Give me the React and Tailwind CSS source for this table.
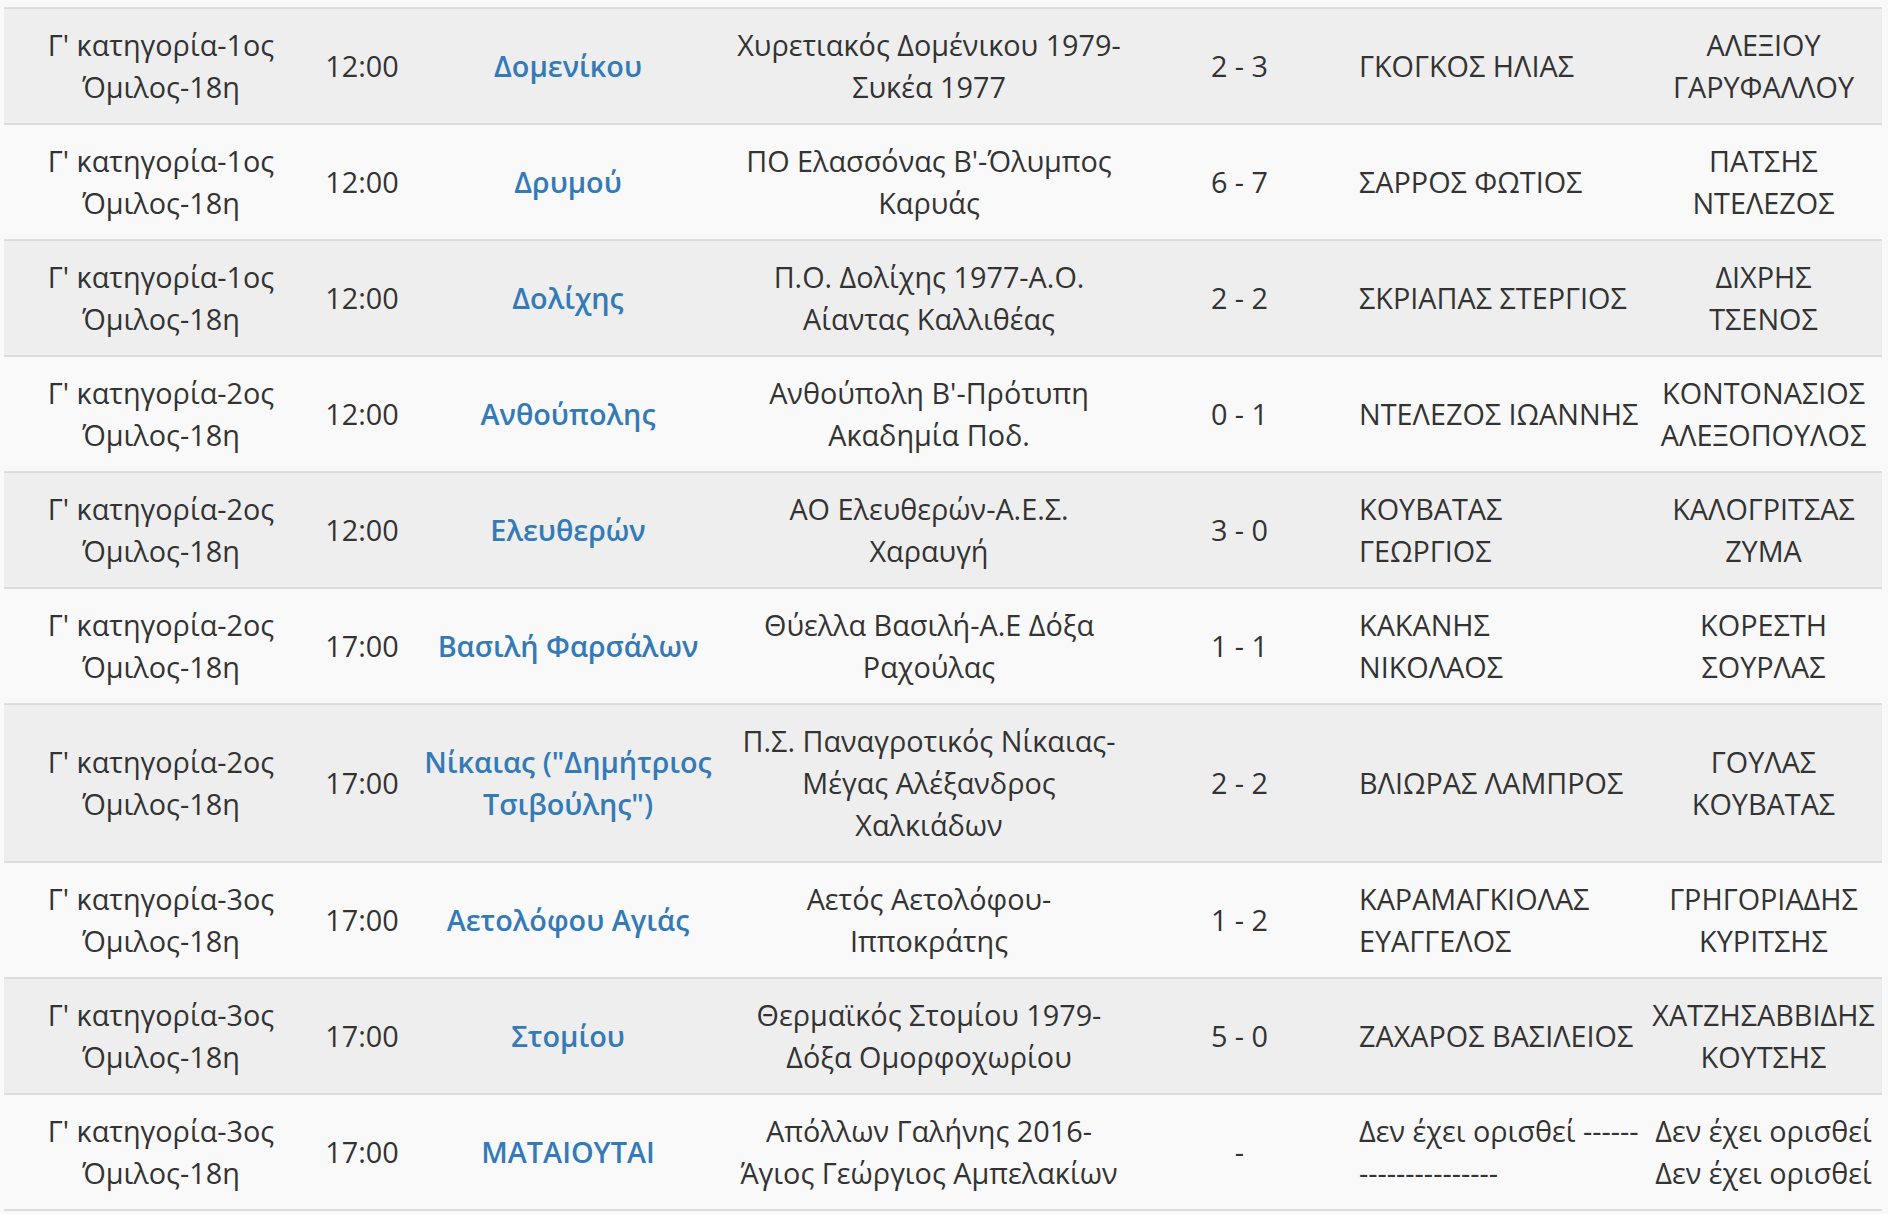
import React from 'react'

const rows = [
  { cat: '1ος', time: '12:00', field: ['Δομενίκου'], match: ['Χυρετιακός Δομένικου 1979-', 'Συκέα 1977'], score: '2 - 3', ref: ['ΓΚΟΓΚΟΣ ΗΛΙΑΣ'], assist: ['ΑΛΕΞΙΟΥ', 'ΓΑΡΥΦΑΛΛΟΥ'] },
  { cat: '1ος', time: '12:00', field: ['Δρυμού'], match: ["ΠΟ Ελασσόνας Β'-Όλυμπος", 'Καρυάς'], score: '6 - 7', ref: ['ΣΑΡΡΟΣ ΦΩΤΙΟΣ'], assist: ['ΠΑΤΣΗΣ', 'ΝΤΕΛΕΖΟΣ'] },
  { cat: '1ος', time: '12:00', field: ['Δολίχης'], match: ['Π.Ο. Δολίχης 1977-Α.Ο.', 'Αίαντας Καλλιθέας'], score: '2 - 2', ref: ['ΣΚΡΙΑΠΑΣ ΣΤΕΡΓΙΟΣ'], assist: ['ΔΙΧΡΗΣ', 'ΤΣΕΝΟΣ'] },
  { cat: '2ος', time: '12:00', field: ['Ανθούπολης'], match: ["Ανθούπολη Β'-Πρότυπη", 'Ακαδημία Ποδ.'], score: '0 - 1', ref: ['ΝΤΕΛΕΖΟΣ ΙΩΑΝΝΗΣ'], assist: ['ΚΟΝΤΟΝΑΣΙΟΣ', 'ΑΛΕΞΟΠΟΥΛΟΣ'] },
  { cat: '2ος', time: '12:00', field: ['Ελευθερών'], match: ['ΑΟ Ελευθερών-Α.Ε.Σ.', 'Χαραυγή'], score: '3 - 0', ref: ['ΚΟΥΒΑΤΑΣ', 'ΓΕΩΡΓΙΟΣ'], assist: ['ΚΑΛΟΓΡΙΤΣΑΣ', 'ΖΥΜΑ'] },
  { cat: '2ος', time: '17:00', field: ['Βασιλή Φαρσάλων'], match: ['Θύελλα Βασιλή-Α.Ε Δόξα', 'Ραχούλας'], score: '1 - 1', ref: ['ΚΑΚΑΝΗΣ', 'ΝΙΚΟΛΑΟΣ'], assist: ['ΚΟΡΕΣΤΗ', 'ΣΟΥΡΛΑΣ'] },
  { cat: '2ος', time: '17:00', field: ['Νίκαιας ("Δημήτριος', 'Τσιβούλης")'], match: ['Π.Σ. Παναγροτικός Νίκαιας-', 'Μέγας Αλέξανδρος', 'Χαλκιάδων'], score: '2 - 2', ref: ['ΒΛΙΩΡΑΣ ΛΑΜΠΡΟΣ'], assist: ['ΓΟΥΛΑΣ', 'ΚΟΥΒΑΤΑΣ'] },
  { cat: '3ος', time: '17:00', field: ['Αετολόφου Αγιάς'], match: ['Αετός Αετολόφου-', 'Ιπποκράτης'], score: '1 - 2', ref: ['ΚΑΡΑΜΑΓΚΙΟΛΑΣ', 'ΕΥΑΓΓΕΛΟΣ'], assist: ['ΓΡΗΓΟΡΙΑΔΗΣ', 'ΚΥΡΙΤΣΗΣ'] },
  { cat: '3ος', time: '17:00', field: ['Στομίου'], match: ['Θερμαϊκός Στομίου 1979-', 'Δόξα Ομορφοχωρίου'], score: '5 - 0', ref: ['ΖΑΧΑΡΟΣ ΒΑΣΙΛΕΙΟΣ'], assist: ['ΧΑΤΖΗΣΑΒΒΙΔΗΣ', 'ΚΟΥΤΣΗΣ'] },
  { cat: '3ος', time: '17:00', field: ['ΜΑΤΑΙΟΥΤΑΙ'], match: ['Απόλλων Γαλήνης 2016-', 'Άγιος Γεώργιος Αμπελακίων'], score: '-', ref: ['Δεν έχει ορισθεί ------', '---------------'], assist: ['Δεν έχει ορισθεί', 'Δεν έχει ορισθεί'] },
]

function Lines({ items }) {
  return items.map((t, i) => <div key={i}>{t}</div>)
}

export default function App() {
  return (
    <div className="min-h-screen bg-[#f9f9f9] pl-[4px] pt-[7px] font-['Open_Sans',sans-serif] text-[28.8px] leading-[42px] text-[#333]">
      <table className="w-[1878px] table-fixed border-collapse">
        <colgroup>
          <col className="w-[314px]" />
          <col className="w-[88px]" />
          <col className="w-[324px]" />
          <col className="w-[398px]" />
          <col className="w-[223px]" />
          <col className="w-[294px]" />
          <col className="w-[237px]" />
        </colgroup>
        <tbody>
          {rows.map((r, i) => (
            <tr
              key={i}
              className={`border-t-2 border-[#dddddd] last:border-b-2 ${i % 2 === 0 ? 'bg-[#eeeeee]' : 'bg-[#f9f9f9]'}`}
            >
              <td className="px-[4px] py-[15px] text-center align-middle whitespace-nowrap">
                <div>Γ' κατηγορία-{r.cat}</div>
                <div>Όμιλος-18η</div>
              </td>
              <td className="px-[2px] py-[15px] text-center align-middle whitespace-nowrap">{r.time}</td>
              <td className="px-[4px] py-[15px] text-center align-middle whitespace-nowrap">
                <a href="#" className="font-semibold text-[#337ab7] no-underline">
                  <Lines items={r.field} />
                </a>
              </td>
              <td className="px-[4px] py-[15px] text-center align-middle whitespace-nowrap">
                <Lines items={r.match} />
              </td>
              <td className="px-[4px] py-[15px] text-center align-middle whitespace-nowrap">{r.score}</td>
              <td className="px-[8px] py-[15px] text-left align-middle whitespace-nowrap">
                <Lines items={r.ref} />
              </td>
              <td className="px-[2px] py-[15px] text-center align-middle whitespace-nowrap">
                <Lines items={r.assist} />
              </td>
            </tr>
          ))}
        </tbody>
      </table>
    </div>
  )
}
